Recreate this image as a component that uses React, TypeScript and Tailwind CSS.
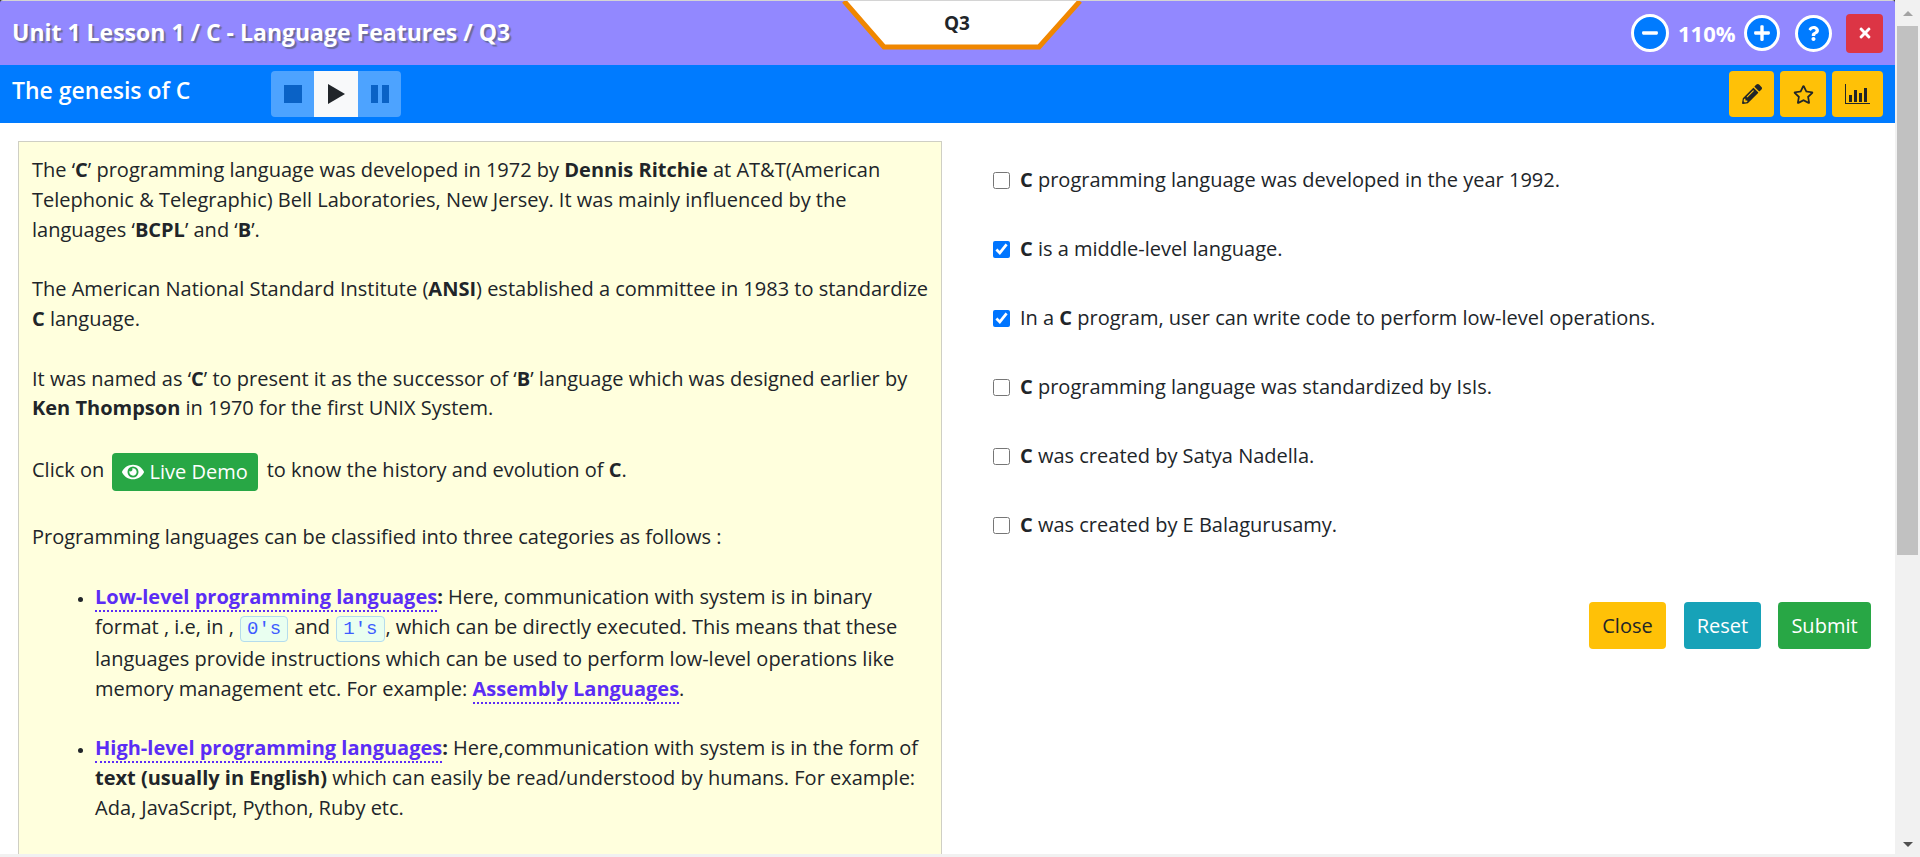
import React from 'react'
import { FaEye, FaMinus, FaPencilAlt, FaPlus, FaQuestion, FaRegStar, FaTimes } from 'react-icons/fa'

const options = [
  <><b>C</b> programming language was developed in the year 1992.</>,
  <><b>C</b> is a middle-level language.</>,
  <>In a <b>C</b> program, user can write code to perform low-level operations.</>,
  <><b>C</b> programming language was standardized by IsIs.</>,
  <><b>C</b> was created by Satya Nadella.</>,
  <><b>C</b> was created by E Balagurusamy.</>,
]
const checked = [false, true, true, false, false, false]

const Code = ({ children }: { children: React.ReactNode }) => (
  <code className="mx-[1px] rounded-[4px] border border-[#b5dcec] bg-[#e9fff0] px-[6px] py-[1px] font-['Liberation_Mono',monospace] text-[19px] text-[#3d5cff]">
    {children}
  </code>
)

const Term = ({ children }: { children: React.ReactNode }) => (
  <a className="border-b-2 border-dotted border-[#5b2df5] font-bold text-[#5b2df5]">{children}</a>
)

const CircleBtn = ({ size, children }: { size: string; children: React.ReactNode }) => (
  <button className={`flex ${size} items-center justify-center rounded-full border-[3px] border-white bg-[#007bff] text-white`}>
    {children}
  </button>
)

function ChartIcon() {
  return (
    <svg width="25" height="20" viewBox="0 0 25 20" fill="#212529">
      <path d="M0 0h1v19H25v1H0z" />
      <rect x="4" y="11" width="3" height="7" />
      <rect x="9" y="6" width="3" height="12" />
      <rect x="14" y="9" width="3" height="9" />
      <rect x="19" y="4" width="3" height="14" />
    </svg>
  )
}

export default function App() {
  return (
    <div className="flex h-[857px] overflow-hidden bg-white font-['Open_Sans',sans-serif] text-[20px] text-[#212529]">
      <div className="relative flex min-w-0 flex-1 flex-col">
        {/* Title bar */}
        <div className="bg-[#333]">
          <div className="overflow-hidden rounded-t-[3px]">
            <div className="h-[1px] bg-[#d4d4d4]" />
            <div className="flex h-[64px] items-center justify-between bg-[#9288ff] pl-[12px] pr-[12px]">
              <h1 className="-mt-[2px] text-[23px] font-bold text-white [text-shadow:2px_2px_1px_#6a6a9c]">
                Unit 1 Lesson 1 / C - Language Features / Q3
              </h1>
              <div className="flex items-center">
                <CircleBtn size="h-[38px] w-[38px]"><FaMinus size={18} /></CircleBtn>
                <span className="ml-[9px] w-[66px] text-[22px] font-bold text-white">110%</span>
                <CircleBtn size="h-[36px] w-[36px]"><FaPlus size={18} /></CircleBtn>
                <div className="ml-[15px]"><CircleBtn size="h-[37px] w-[37px]"><FaQuestion size={15} /></CircleBtn></div>
                <button className="ml-[14px] flex h-[39px] w-[37px] items-center justify-center rounded-[4px] bg-[#dc3545] text-white">
                  <FaTimes size={16} />
                </button>
              </div>
            </div>
          </div>
        </div>

        {/* Question tab */}
        <div className="absolute left-[842px] top-[1px] h-[49px] w-[240px]">
          <svg width="240" height="49" viewBox="0 0 240 49" className="absolute inset-0">
            <path d="M2 0 L42 46 H197 L238 0 Z" fill="#fff" />
            <path d="M2 0 L42 46 H197 L238 0" fill="none" stroke="#f08700" strokeWidth="5" />
          </svg>
          <div className="absolute left-0 right-[10px] top-[8px] text-center text-[19px] font-bold">Q3</div>
        </div>

        {/* Lesson toolbar */}
        <div className="flex h-[58px] items-center justify-between bg-[#007bff] pl-[12px] pr-[12px]">
          <div className="flex items-center">
            <h2 className="-mt-[7px] w-[259px] text-[23px] font-semibold text-white">The genesis of C</h2>
            <div className="flex h-[46px] overflow-hidden rounded-[4px]">
              <button className="flex w-[43px] items-center justify-center bg-[#4da3ff]">
                <svg width="18" height="18" viewBox="0 0 18 18" fill="#0a62c6"><rect width="18" height="18" /></svg>
              </button>
              <button className="flex w-[44px] items-center justify-center bg-[#f8f9fa]">
                <svg width="17" height="20" viewBox="0 0 17 20" fill="#212529"><path d="M0 0 L17 10 L0 20 Z" /></svg>
              </button>
              <button className="flex w-[43px] items-center justify-center bg-[#4da3ff]">
                <svg width="18" height="18" viewBox="0 0 18 18" fill="#0a62c6"><rect width="7" height="18" /><rect x="11" width="7" height="18" /></svg>
              </button>
            </div>
          </div>
          <div className="flex gap-[6px]">
            <button className="flex h-[46px] w-[45px] items-center justify-center rounded-[4px] bg-[#ffc107]"><FaPencilAlt size={20} /></button>
            <button className="flex h-[46px] w-[46px] items-center justify-center rounded-[4px] bg-[#ffc107]"><FaRegStar size={21} /></button>
            <button className="flex h-[46px] w-[51px] items-center justify-center rounded-[4px] bg-[#ffc107]"><ChartIcon /></button>
          </div>
        </div>

        {/* Body */}
        <div className="flex min-h-0 flex-1">
          <div className="ml-[18px] mt-[18px] w-[924px] shrink-0 overflow-hidden border border-b-0 border-[#cfcfc4] bg-[#ffffdd] px-[13px] pt-[13px] leading-[29.8px] whitespace-nowrap">
            <p>
              The ‘<b>C</b>’ programming language was developed in 1972 by <b>Dennis Ritchie</b> at AT&amp;T(American<br />
              Telephonic &amp; Telegraphic) Bell Laboratories, New Jersey. It was mainly influenced by the<br />
              languages ‘<b>BCPL</b>’ and ‘<b>B</b>’.
            </p>
            <p className="mt-[29.8px]">
              The American National Standard Institute (<b>ANSI</b>) established a committee in 1983 to standardize<br />
              <b>C</b> language.
            </p>
            <p className="mt-[29.8px]">
              It was named as ‘<b>C</b>’ to present it as the successor of ‘<b>B</b>’ language which was designed earlier by<br />
              <b>Ken Thompson</b> in 1970 for the first UNIX System.
            </p>
            <p className="mt-[29.8px]">
              Click on{' '}
              <button className="mx-[3px] inline-flex h-[38px] w-[146px] items-center gap-[5px] rounded-[4px] bg-[#28a745] pl-[10px] align-middle text-white">
                <FaEye size={22} /> Live Demo
              </button>{' '}
              to know the history and evolution of <b>C</b>.
            </p>
            <p className="mt-[31px]">Programming languages can be classified into three categories as follows :</p>
            <ul className="mt-[30px] list-disc pl-[63px] marker:text-[15px]">
              <li>
                <Term>Low-level programming languages</Term><b>:</b> Here, communication with system is in binary<br />
                format , i.e, in , <Code>0's</Code> and <Code>1's</Code>, which can be directly executed. This means that these<br />
                languages provide instructions which can be used to perform low-level operations like<br />
                memory management etc. For example: <Term>Assembly Languages</Term>.
              </li>
              <li className="mt-[29px]">
                <Term>High-level programming languages</Term><b>:</b> Here,communication with system is in the form of<br />
                <b>text (usually in English)</b> which can easily be read/understood by humans. For example:<br />
                Ada, JavaScript, Python, Ruby etc.
              </li>
            </ul>
          </div>

          <div className="min-w-0 flex-1 pl-[51px] pr-[24px] pt-[42px]">
            <div className="flex flex-col gap-[39px]">
              {options.map((o, i) => (
                <label key={i} className="flex h-[30px] items-center gap-[10px] whitespace-nowrap">
                  <input type="checkbox" defaultChecked={checked[i]} className="h-[17px] w-[17px] shrink-0 accent-[#0075ff]" />
                  <span>{o}</span>
                </label>
              ))}
            </div>
            <div className="mt-[62px] flex justify-end">
              <button className="h-[47px] w-[77px] rounded-[4px] bg-[#ffc107]">Close</button>
              <button className="ml-[18px] h-[47px] w-[77px] rounded-[4px] bg-[#17a2b8] text-white">Reset</button>
              <button className="ml-[17px] h-[47px] w-[93px] rounded-[4px] bg-[#28a745] text-white">Submit</button>
            </div>
          </div>
        </div>
        <div className="h-[3px] shrink-0 bg-[#f1f1f1]" />
      </div>

      {/* Scrollbar */}
      <div className="flex w-[25px] shrink-0 flex-col items-center bg-[#f1f1f1]">
        <div className="flex h-[26px] items-center justify-center">
          <div className="h-0 w-0 border-x-[5px] border-b-[5px] border-x-transparent border-b-[#a3a3a3]" />
        </div>
        <div className="h-[529px] w-[21px] bg-[#c1c1c1]" />
        <div className="flex-1" />
        <div className="flex h-[26px] items-center justify-center">
          <div className="h-0 w-0 border-x-[5px] border-t-[5px] border-x-transparent border-t-[#505050]" />
        </div>
      </div>
    </div>
  )
}
